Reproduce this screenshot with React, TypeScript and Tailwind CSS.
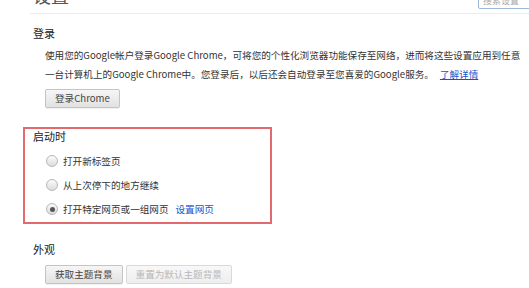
import React from "react";

const F = { fontFamily: "'Noto Sans CJK SC', 'Noto Sans', sans-serif" };

function Radio({ checked }: { checked?: boolean }) {
  return (
    <span className="relative inline-flex h-[12px] w-[12px] items-center justify-center rounded-full border border-[#b8b8b8] bg-gradient-to-b from-[#fbfbfb] to-[#dcdcdc]">
      {checked && <span className="h-[5px] w-[5px] rounded-full bg-[#555]" />}
    </span>
  );
}

function Btn({ children, disabled }: { children: React.ReactNode; disabled?: boolean }) {
  return (
    <button
      className={
        disabled
          ? "h-[19px] rounded-[2px] border border-[#d9d9d9] bg-gradient-to-b from-[#f8f8f8] to-[#eeeeee] px-[9px] text-[9.6px] leading-[17px] text-[#b8b8b8]"
          : "h-[19px] rounded-[2px] border border-[#c4c4c4] bg-gradient-to-b from-[#f6f6f6] to-[#e2e2e2] px-[9px] text-[9.6px] leading-[17px] text-[#444] shadow-[0_1px_0_rgba(0,0,0,0.06)]"
      }
      style={F}
    >
      {children}
    </button>
  );
}

export default function App() {
  return (
    <div className="relative h-[288px] w-[529px] overflow-hidden bg-white" style={F}>
      {/* header */}
      <div className="ml-[30px] flex h-[14px] items-start justify-between overflow-hidden border-b border-[#ececec]">
        <div className="-mt-[15px] ml-[3px] text-[18px] leading-[20px] text-[#555]">设置</div>
        <div className="-mt-[12px] mr-[-49px] flex h-[21px] w-[100px] items-end rounded-[2px] border border-[#9fb7d6] px-[4px] pb-[2px] text-[9px] leading-[10px] text-[#aaa]">
          搜索设置
        </div>
      </div>

      {/* 登录 */}
      <div className="pl-[33px] pt-[12px]">
        <div className="text-[11px] leading-[14px] text-[#222]">登录</div>
        <div className="mt-[6px] pl-[12px] text-[9.6px] leading-[19px] text-[#333]">
          <div className="whitespace-nowrap">
            使用您的Google帐户登录Google Chrome，可将您的个性化浏览器功能保存至网络，进而将这些设置应用到任意
          </div>
          <div className="whitespace-nowrap">
            一台计算机上的Google Chrome中。您登录后，以后还会自动登录至您喜爱的Google服务。
            <span className="ml-[6px] text-[#1155cc] underline">了解详情</span>
          </div>
          <div className="mt-[5px] flex">
            <Btn>登录Chrome</Btn>
          </div>
        </div>
      </div>

      {/* 启动时 */}
      <div className="ml-[23px] mt-[19px] h-[97px] w-[249px] border-2 border-[#e26a6c] pl-[8px]">
        <div className="text-[11px] leading-[14px] text-[#222]">启动时</div>
        <div className="mt-[11px] flex flex-col gap-[10px] pl-[13px] text-[9.6px] leading-[14px] text-[#333]">
          <label className="flex items-center gap-[5px]">
            <Radio />
            <span>打开新标签页</span>
          </label>
          <label className="flex items-center gap-[5px]">
            <Radio />
            <span>从上次停下的地方继续</span>
          </label>
          <label className="flex items-center gap-[5px]">
            <Radio checked />
            <span>打开特定网页或一组网页</span>
            <span className="ml-[2px] text-[#1155cc]">设置网页</span>
          </label>
        </div>
      </div>

      {/* 外观 */}
      <div className="pl-[33px] pt-[18px]">
        <div className="text-[11px] leading-[14px] text-[#222]">外观</div>
        <div className="mt-[9px] flex gap-[3px] pl-[12px]">
          <Btn>获取主题背景</Btn>
          <Btn disabled>重置为默认主题背景</Btn>
        </div>
      </div>
    </div>
  );
}
